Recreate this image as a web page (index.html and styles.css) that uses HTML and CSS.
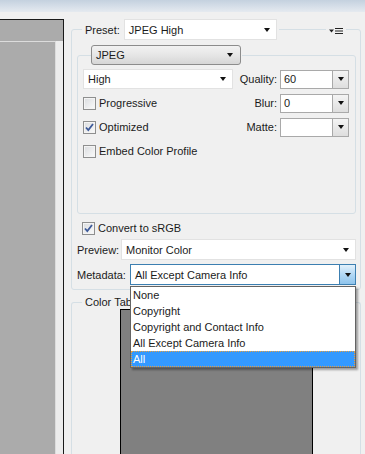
FILE: index.html
```html
<!DOCTYPE html>
<html>
<head>
  <title>Save for Web</title>
  <link rel="stylesheet" href="styles.css">
</head>
<body>
  <div class="titlebar"></div>
  <div class="main">
    <div class="preview-pane">
      <div class="preview-top"></div>
      <div class="preview-body">
        <div class="preview-canvas"></div>
      </div>
    </div>

    <div class="settings">
      <fieldset class="group preset-group">
        <legend class="preset-legend">
          <div class="legend-row">
            <span class="label">Preset:</span>
            <div class="select preset-select"><span>JPEG High</span><i class="arrow"></i></div>
          </div>
        </legend>
        <span class="panel-menu">
          <svg width="14" height="8" viewBox="0 0 14 8">
            <path d="M0 2.5h5l-2.5 3z" fill="#222"/>
            <path d="M6 1.5h8M6 4h8M6 6.5h8" stroke="#222" stroke-width="1"/>
          </svg>
        </span>

        <fieldset class="group format-group">
          <legend class="format-legend">
            <div class="button-select"><span>JPEG</span><i class="arrow"></i></div>
          </legend>
          <div class="options">
            <div class="select quality-level"><span>High</span><i class="arrow"></i></div>
            <div class="field">
              <span class="label">Quality:</span>
              <div class="combo"><span>60</span><b class="combo-btn"><i class="arrow"></i></b></div>
            </div>

            <label class="check"><span class="box"></span>Progressive</label>
            <div class="field">
              <span class="label">Blur:</span>
              <div class="combo"><span>0</span><b class="combo-btn"><i class="arrow"></i></b></div>
            </div>

            <label class="check"><span class="box checked">
              <svg width="9" height="9" viewBox="0 0 9 9"><path d="M1 4.5l2.3 2.6L8 1" fill="none" stroke="#3d5a99" stroke-width="1.8"/></svg>
            </span>Optimized</label>
            <div class="field">
              <span class="label">Matte:</span>
              <div class="combo"><span></span><b class="combo-btn"><i class="arrow"></i></b></div>
            </div>

            <label class="check"><span class="box"></span>Embed Color Profile</label>
          </div>
        </fieldset>

        <label class="check srgb"><span class="box checked">
          <svg width="9" height="9" viewBox="0 0 9 9"><path d="M1 4.5l2.3 2.6L8 1" fill="none" stroke="#3d5a99" stroke-width="1.8"/></svg>
        </span>Convert to sRGB</label>

        <div class="field-row">
          <span class="label">Preview:</span>
          <div class="select preview-select"><span>Monitor Color</span><i class="arrow"></i></div>
        </div>
        <div class="field-row metadata-row">
          <span class="label">Metadata:</span>
          <div class="select metadata-select"><span>All Except Camera Info</span><b class="focus-btn"><i class="arrow"></i></b></div>
        </div>
      </fieldset>

      <fieldset class="group color-group">
        <legend class="color-legend">Color Table</legend>
        <div class="swatches"></div>
      </fieldset>

      <ul class="dropdown">
        <li>None</li>
        <li>Copyright</li>
        <li>Copyright and Contact Info</li>
        <li>All Except Camera Info</li>
        <li class="selected">All</li>
      </ul>
    </div>
  </div>
</body>
</html>
```

FILE: styles.css
```css
body {
  margin: 0;
  width: 365px;
  height: 454px;
  overflow: hidden;
  background-color: #f0f0f0;
  font-family: "Liberation Sans", Arial, sans-serif;
  font-size: 11px;
  color: #1b1b1b;
}

.titlebar {
  height: 12px;
  background: linear-gradient(#c4d1df, #e5eaf0);
}

.main {
  display: flex;
}

/* left: image preview */
.preview-pane {
  width: 63px;
  margin-top: 7px;
  border-top: 1px solid #1a1a1a;
  border-right: 1px solid #1a1a1a;
  background-color: #ababab;
}

.preview-top {
  height: 21px;
}

.preview-body {
  height: 413px;
  background-color: #ececec;
}

.preview-canvas {
  width: 55px;
  height: 412px;
  background-color: #ababab;
  border-top: 1px solid #dcdcdc;
  border-right: 1px solid #dcdcdc;
}

/* right: optimize settings */
.settings {
  flex: 1;
  position: relative;
  padding: 7px 0 0 7px;
}

fieldset {
  margin: 0;
  padding: 0;
  min-width: 0;
}

legend {
  padding: 0;
}

.group {
  border: 1px solid #d5dfe5;
  border-radius: 3px;
}

.preset-group {
  position: relative;
  width: 290px;
  box-sizing: border-box;
  padding: 0 4px 4px 5px;
}

.preset-legend {
  margin-left: 5px;
  padding: 0 2px 0 3px;
}

.legend-row {
  display: flex;
  align-items: center;
  gap: 4px;
}

.panel-menu {
  position: absolute;
  left: 254px;
  top: -13px;
  padding: 0 3px;
  background-color: #f0f0f0;
  line-height: 0;
}

.select {
  position: relative;
  display: flex;
  align-items: center;
  box-sizing: border-box;
  height: 21px;
  padding-left: 4px;
  background-color: #fff;
  border: 1px solid #e2e2e2;
}

.arrow {
  position: absolute;
  right: 6px;
  top: 50%;
  margin-top: -2px;
  width: 0;
  height: 0;
  border-left: 3.5px solid transparent;
  border-right: 3.5px solid transparent;
  border-top: 4px solid #111;
}

.preset-select {
  width: 153px;
}

.format-group {
  margin-top: 5px;
  padding: 0 6px 52px 5px;
}

.format-legend {
  margin-left: 8px;
  padding: 0 1px 0 0;
}

.button-select {
  position: relative;
  box-sizing: border-box;
  width: 150px;
  height: 20px;
  padding: 3px 4px;
  border: 1px solid #8c8c8c;
  border-radius: 3px;
  background: linear-gradient(#f2f2f2, #e6e6e6 50%, #d6d6d6);
}

.button-select .arrow {
  right: 7px;
}

.options {
  display: grid;
  grid-template-columns: 150px 1fr;
  grid-auto-rows: 20px;
  row-gap: 4px;
  padding-top: 4px;
}

.quality-level {
  height: 20px;
}

.field {
  display: flex;
  justify-content: flex-end;
  align-items: center;
  gap: 3px;
}

.combo {
  position: relative;
  display: flex;
  align-items: center;
  box-sizing: border-box;
  width: 69px;
  height: 19px;
  padding-left: 3px;
  background-color: #fff;
  border: 1px solid #a9a9a9;
}

.combo-btn {
  position: absolute;
  right: 0;
  top: 0;
  bottom: 0;
  width: 15px;
  border-left: 1px solid #a9a9a9;
  background: linear-gradient(#f4f4f4, #dedede);
}

.combo-btn .arrow {
  right: 4px;
}

.check {
  display: flex;
  align-items: center;
  gap: 3px;
}

.box {
  box-sizing: border-box;
  width: 13px;
  height: 13px;
  border: 1px solid #8e8f8f;
  background: linear-gradient(135deg, #dadcdf, #fbfbfb);
  box-shadow: inset 0 0 0 1px #f4f4f4;
  display: flex;
  align-items: center;
  justify-content: center;
}

.srgb {
  height: 20px;
  margin-top: 4px;
  padding-left: 5px;
}

.field-row {
  display: flex;
  align-items: center;
  justify-content: space-between;
  margin-top: 1px;
}

.preview-select {
  width: 235px;
}

.metadata-row {
  margin-top: 4px;
}

.metadata-select {
  width: 226px;
  border-color: #3c7fb1;
}

.focus-btn {
  position: absolute;
  right: 0;
  top: 0;
  bottom: 0;
  width: 15px;
  border-left: 1px solid #3c7fb1;
  background: linear-gradient(#e3f1fb, #b2d8f5 50%, #8fc4ec);
}

.focus-btn .arrow {
  right: 4px;
}

.color-group {
  margin-top: 6px;
  width: 290px;
  height: 158px;
  box-sizing: border-box;
  border-bottom: none;
  border-radius: 3px 3px 0 0;
  padding: 0 0 0 48px;
}

.color-legend {
  margin-left: -38px;
  padding: 0 3px;
}

.swatches {
  width: 193px;
  height: 145px;
  margin-top: 1px;
  box-sizing: border-box;
  border: 1px solid #000;
  border-bottom: none;
  background-color: #808080;
}

/* open metadata list */
.dropdown {
  position: absolute;
  left: 66px;
  top: 274px;
  width: 226px;
  margin: 0;
  padding: 0;
  list-style: none;
  box-sizing: border-box;
  background-color: #fff;
  border: 1px solid #646464;
  box-shadow: 2px 2px 2px rgba(0, 0, 0, 0.35);
}

.dropdown li {
  height: 16px;
  line-height: 16px;
  padding-left: 2px;
}

.dropdown .selected {
  background-color: #3399ff;
  color: #fff;
  outline: 1px dotted #e8a040;
  outline-offset: -1px;
}
```
